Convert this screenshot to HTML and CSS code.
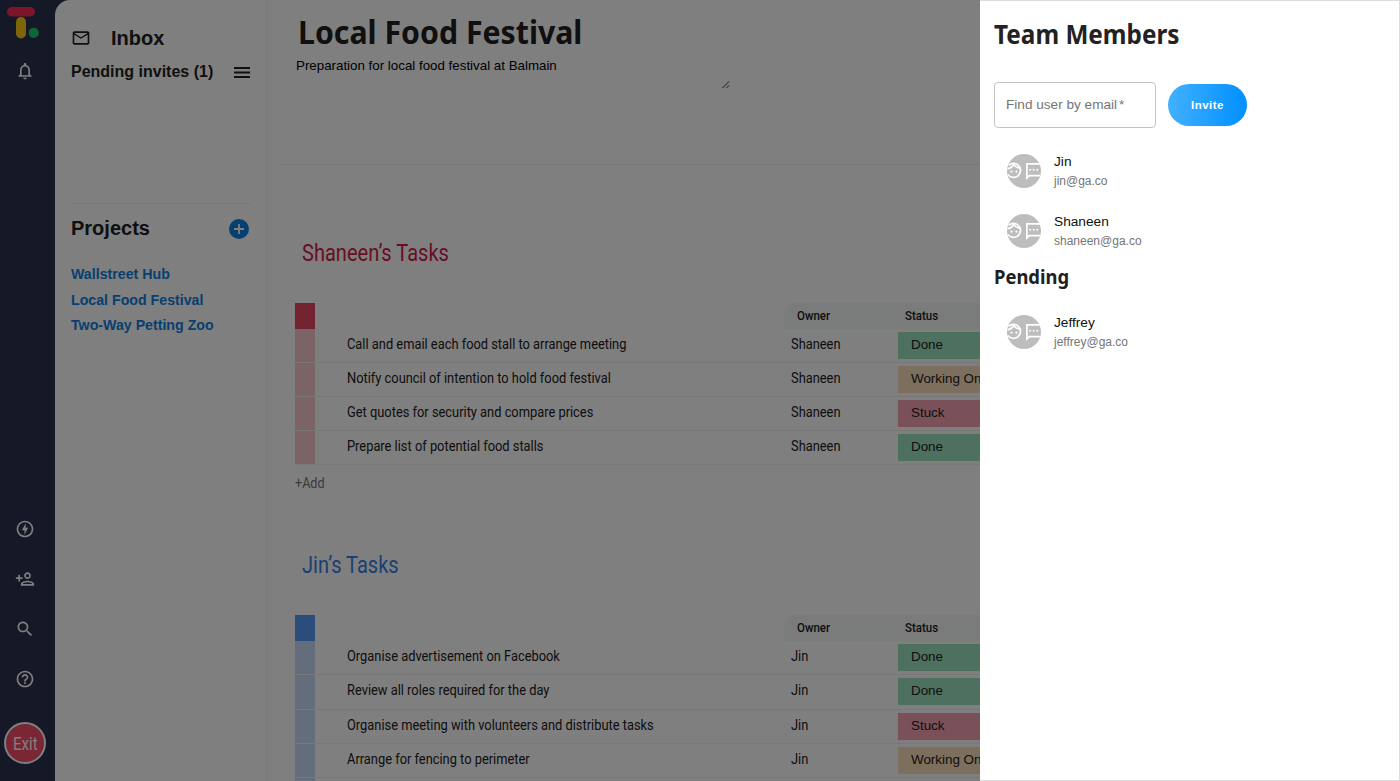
FILE: index.html
```html
<!DOCTYPE html>
<html lang="en">
<head>
<meta charset="utf-8">
<title>Local Food Festival</title>
<link rel="stylesheet" href="styles.css">
</head>
<body>
<svg class="defs" width="0" height="0">
  <symbol id="avatar" viewBox="0 0 34 34">
    <circle cx="17" cy="17" r="17" fill="#bdbdbd"/>
    <g fill="none" stroke="#fff" stroke-width="1.7">
      <path d="M1.600 11.400A7 7 0 1 1 .9 20.600"/>
      <path d="M.5 14.800Q5.300 14 6.600 10.400Q9 14.300 14 13.800"/>
      <path d="M33.200 9.800H19.900V24L22.300 21.600H33.200"/>
    </g>
    <g fill="#fff"><circle cx="4.500" cy="17.600" r="1.100"/><circle cx="9.400" cy="17.600" r="1.100"/><circle cx="23.200" cy="15.700" r="1"/><circle cx="26.700" cy="15.700" r="1"/><circle cx="30.200" cy="15.700" r="1"/></g>
  </symbol>
</svg>
<div class="app">
  <nav class="rail">
    <svg class="logo" width="34" height="34" viewBox="0 0 34 34"><rect x="1" y="1" width="28" height="9.500" rx="4.700" fill="#fb2a55"/><rect x="10" y="11" width="10" height="21.500" rx="5" fill="#fdcb14"/><circle cx="27.700" cy="26.800" r="5.100" fill="#18cc6c"/></svg>
    <svg class="icon bell" viewBox="0 0 24 24"><path d="M12 22c1.100 0 2-.9 2-2h-4c0 1.100.9 2 2 2zm6-6v-5c0-3.070-1.630-5.640-4.500-6.320V4c0-.83-.67-1.500-1.500-1.500s-1.500.67-1.500 1.500v.68C7.640 5.360 6 7.920 6 11v5l-2 2v1h16v-1l-2-2zm-2 1H8v-6c0-2.480 1.510-4.500 4-4.500s4 2.020 4 4.500v6z"/></svg>
    <div class="rail-bottom">
      <svg class="icon" viewBox="0 0 24 24"><path d="M12 2.020c-5.510 0-9.980 4.470-9.980 9.980s4.470 9.980 9.980 9.980 9.980-4.470 9.980-9.980S17.510 2.020 12 2.020zm0 17.960c-4.400 0-7.980-3.580-7.980-7.980S7.600 4.020 12 4.020 19.980 7.600 19.980 12 16.400 19.980 12 19.980zM12.750 5l-4.500 8.500h3.140V19l4.360-8.500h-3V5z"/></svg>
      <svg class="icon" viewBox="0 0 24 24"><path d="M15 12c2.210 0 4-1.790 4-4s-1.790-4-4-4-4 1.790-4 4 1.790 4 4 4zm0-6c1.100 0 2 .9 2 2s-.9 2-2 2-2-.9-2-2 .9-2 2-2zm0 8c-2.670 0-8 1.340-8 4v2h16v-2c0-2.660-5.330-4-8-4zm-6 4c.22-.72 3.310-2 6-2 2.700 0 5.800 1.290 6 2H9zm-3-3v-3h3v-2H6V7H4v3H1v2h3v3z"/></svg>
      <svg class="icon" viewBox="0 0 24 24"><path d="M15.500 14h-.79l-.28-.27C15.410 12.590 16 11.110 16 9.500 16 5.910 13.090 3 9.500 3S3 5.910 3 9.500 5.910 16 9.500 16c1.610 0 3.090-.59 4.230-1.570l.27.28v.79l5 4.990L20.490 19l-4.990-5zm-6 0C7.010 14 5 11.990 5 9.500S7.010 5 9.500 5 14 7.010 14 9.500 11.990 14 9.500 14z"/></svg>
      <svg class="icon" viewBox="0 0 24 24"><path d="M11 18h2v-2h-2v2zm1-16C6.480 2 2 6.480 2 12s4.480 10 10 10 10-4.480 10-10S17.520 2 12 2zm0 18c-4.410 0-8-3.590-8-8s3.590-8 8-8 8 3.590 8 8-3.590 8-8 8zm0-14c-2.210 0-4 1.790-4 4h2c0-1.100.9-2 2-2s2 .9 2 2c0 2-3 1.750-3 5h2c0-2.250 3-2.500 3-5 0-2.210-1.790-4-4-4z"/></svg>
      <button class="exit"><span>Exit</span></button>
    </div>
  </nav>
  <div class="sheet">
    <aside class="side">
      <div class="inbox">
        <svg class="mail" viewBox="0 0 24 24"><path d="M20 4H4c-1.100 0-2 .9-2 2v12c0 1.100.9 2 2 2h16c1.100 0 2-.9 2-2V6c0-1.100-.9-2-2-2zm0 14H4V8l8 5 8-5v10zm-8-7L4 6h16l-8 5z"/></svg>
        <h2>Inbox</h2>
      </div>
      <div class="invites"><span>Pending invites (1)</span><svg width="16" height="12" viewBox="0 0 16 12"><path d="M0 2h16M0 6.500h16M0 11h16" stroke="#202020" stroke-width="1.800"/></svg></div>
      <div class="projects">
        <div class="projects-head"><h2>Projects</h2>
        <svg width="22" height="22" viewBox="0 0 22 22"><circle cx="11" cy="12" r="10" fill="#0f7ee0"/><path d="M11 7v10M6 12h10" stroke="#fff" stroke-width="1.800"/></svg></div>
        <a>Wallstreet Hub</a><a>Local Food Festival</a><a>Two-Way Petting Zoo</a>
      </div>
    </aside>
    <main class="main">
      <header class="head">
        <h1>Local Food Festival</h1>
        <div class="desc"><p>Preparation for local food festival at Balmain</p>
        <svg width="8" height="8" viewBox="0 0 8 8"><path d="M.5 7L7 .5M4.500 7L7 4.500" stroke="#333"/></svg></div>
      </header>
      <section class="group red">
        <h3><span>Shaneen’s Tasks</span></h3>
        <div class="row top"><i></i><b class="th-fill"></b><b class="th own"><span>Owner</span></b><b class="th stat"><span>Status</span></b></div>
        <div class="row"><i></i><p><span>Call and email each food stall to arrange meeting</span></p><div class="owner"><span>Shaneen</span></div><div class="status done">Done</div></div>
        <div class="row"><i></i><p><span>Notify council of intention to hold food festival</span></p><div class="owner"><span>Shaneen</span></div><div class="status work">Working On It</div></div>
        <div class="row"><i></i><p><span>Get quotes for security and compare prices</span></p><div class="owner"><span>Shaneen</span></div><div class="status stuck">Stuck</div></div>
        <div class="row"><i></i><p><span>Prepare list of potential food stalls</span></p><div class="owner"><span>Shaneen</span></div><div class="status done">Done</div></div>
        <div class="add"><span>+Add</span></div>
      </section>
      <section class="group blue">
        <h3><span>Jin’s Tasks</span></h3>
        <div class="row top"><i></i><b class="th-fill"></b><b class="th own"><span>Owner</span></b><b class="th stat"><span>Status</span></b></div>
        <div class="row"><i></i><p><span>Organise advertisement on Facebook</span></p><div class="owner"><span>Jin</span></div><div class="status done">Done</div></div>
        <div class="row"><i></i><p><span>Review all roles required for the day</span></p><div class="owner"><span>Jin</span></div><div class="status done">Done</div></div>
        <div class="row"><i></i><p><span>Organise meeting with volunteers and distribute tasks</span></p><div class="owner"><span>Jin</span></div><div class="status stuck">Stuck</div></div>
        <div class="row"><i></i><p><span>Arrange for fencing to perimeter</span></p><div class="owner"><span>Jin</span></div><div class="status work">Working On It</div></div>
        <div class="row"><i></i></div>
      </section>
    </main>
  </div>
</div>
<div class="backdrop"></div>
<aside class="drawer">
  <h1><span>Team Members</span></h1>
  <div class="form"><div class="field">Find user by email<span>*</span></div><button class="invite">Invite</button></div>
  <div class="member"><svg><use href="#avatar"/></svg><div><strong>Jin</strong><small>jin@ga.co</small></div></div>
  <div class="member"><svg><use href="#avatar"/></svg><div><strong>Shaneen</strong><small>shaneen@ga.co</small></div></div>
  <h2><span>Pending</span></h2>
  <div class="member"><svg><use href="#avatar"/></svg><div><strong>Jeffrey</strong><small>jeffrey@ga.co</small></div></div>
</aside>
</body>
</html>
```
FILE: styles.css
```css
* { box-sizing: border-box; }
body { margin: 0; width: 1400px; height: 781px; overflow: hidden; font-family: "Liberation Sans", Arial, sans-serif; color: #202020; }
h1, h2, h3, p { margin: 0; }
.defs { display: block; height: 0; }
.app { display: flex; width: 1400px; height: 781px; overflow: hidden; background: #2b304e; }
.rail { width: 55px; flex: none; display: flex; flex-direction: column; align-items: center; padding: 6px 5px 17px 0; }
.logo { align-self: flex-start; margin-left: 6px; }
.icon { width: 20px; height: 20px; fill: #fff; display: block; }
.bell { margin-top: 21px; }
.rail-bottom { margin-top: auto; display: flex; flex-direction: column; align-items: center; gap: 30px; }
.exit { width: 42px; height: 42px; margin-top: 3px; border: 2px solid #fff; border-radius: 50%; background: #f64c6b; color: #fff; font: 17.500px Roboto, sans-serif; padding: 1px 0 0; }
.exit span { display: inline-block; transform: scaleX(.86); }
.sheet { flex: 1; display: flex; background: #fff; border-top-left-radius: 15px; }
.side { width: 213px; flex: none; border-right: 1px solid #f2f2f2; padding: 25px 16px 0; }
.side h2 { font-size: 20px; line-height: 26px; }
.inbox { display: flex; align-items: center; gap: 20px; }
.mail { width: 20px; height: 20px; fill: #202020; }
.invites { display: flex; justify-content: space-between; align-items: center; font-weight: bold; font-size: 16px; line-height: 20px; margin-top: 11px; padding-right: 1px; }
.projects { margin-top: 121px; border-top: 1px solid #f0f0f0; padding-top: 11px; }
.projects-head { display: flex; justify-content: space-between; align-items: center; margin-bottom: 21px; padding-right: 1px; }
.projects a { display: block; color: #0f7ee0; font-weight: bold; font-size: 14.200px; line-height: 25.500px; }
.main { flex: 1; padding-left: 13px; overflow: hidden; }
.head { height: 165px; border-bottom: 1px solid #f0f0f0; padding: 7px 0 0 15px; }
.head h1 { font: bold 33px/50px "Noto Sans", sans-serif; white-space: nowrap; transform: scaleX(.917); transform-origin: 0 0; margin-left: 2px; }
.desc { display: flex; width: 434px; justify-content: space-between; align-items: flex-end; height: 32px; color: #000; font-size: 13.330px; }
.desc p { align-self: flex-start; line-height: 17px; }
.group { padding-left: 14px; font-family: Roboto, sans-serif; }
.group h3 { font-weight: 400; font-size: 24px; line-height: 32px; padding-left: 7px; }
.group.red h3 { margin-top: 72px; color: #cf1c45; }
.group.blue h3 { margin-top: 50px; color: #347fe8; }
.group h3 span { display: inline-block; transform: scaleX(.835); transform-origin: 0 50%; }
.row { display: flex; height: 34.100px; border-bottom: 1px solid #f0f0f0; }
.row.top { height: 26px; margin-top: 34px; border: 0; }
.row i { width: 20px; flex: none; }
.red i { background: #f7c7cc; }
.red .top i { background: #e5465f; }
.blue i { background: #c6dbf9; }
.blue .top i { background: #559af7; }
.row p { width: 469px; padding-left: 31.500px; font-size: 15px; line-height: 31.500px; }
.row p span, .owner span { display: inline-block; white-space: nowrap; transform: scaleX(.857); transform-origin: 0 50%; }
.th-fill { width: 469px; }
.th { background: #f4f6f6; font-size: 13.500px; line-height: 25px; font-weight: 500; }
.th span { display: inline-block; transform: scaleX(.85); transform-origin: 0 50%; }
.own { width: 114px; border-top-left-radius: 12px; padding-left: 13px; }
.stat { flex: 1; padding-left: 7px; }
.owner { width: 114px; padding-left: 7px; font-size: 15px; line-height: 31.500px; }
.status { flex: 1; height: 27px; margin-top: 3px; padding-left: 13px; font: 13.400px/25px "Liberation Sans", Arial, sans-serif; white-space: nowrap; }
.done { background: #9de0bc; }
.work { background: #fbdfbb; }
.stuck { background: #f5a3b1; }
.add { color: #777; font-size: 15px; line-height: 36px; height: 34px; }
.add span { display: inline-block; transform: scaleX(.84); transform-origin: 0 50%; }
.backdrop { position: fixed; inset: 0; background: rgba(0, 0, 0, .5); }
.drawer { position: fixed; inset: 0 0 0 auto; width: 420px; background: #fff; border: 1px solid #ddd; border-width: 1px 1px 1px 0; padding: 10px 14px; }
.drawer h1 { font: bold 26px/46px "Noto Sans", sans-serif; color: #222; }
.drawer h1 span { display: inline-block; transform: scaleX(.935); transform-origin: 0 50%; }
.drawer h2 span { display: inline-block; transform: scaleX(.92); transform-origin: 0 50%; }
.drawer h2 { font: bold 20px/28px "Noto Sans", sans-serif; margin: 2px 0 11px; }
.form { display: flex; align-items: center; gap: 12px; margin: 25px 0 13px; }
.field { width: 162px; height: 46px; border: 1px solid #c4c4c4; border-radius: 4px; padding-left: 11px; line-height: 43px; font-size: 13.600px; color: #757575; white-space: nowrap; }
.field span { margin-left: 2px; }
.invite { width: 79px; height: 42px; border: 0; border-radius: 21px; background: linear-gradient(90deg, #42b0ff, #0090ff); color: #fff; font: bold 11.500px "Liberation Sans", Arial, sans-serif; letter-spacing: .5px; }
.member { display: flex; align-items: center; gap: 13px; height: 60px; padding-left: 13px; }
.member svg { width: 34px; height: 34px; }
.member strong { display: block; font-weight: 400; font-size: 13.700px; line-height: 20px; color: #111; }
.member small { display: block; font-size: 12px; line-height: 18px; color: #757575; }
```
